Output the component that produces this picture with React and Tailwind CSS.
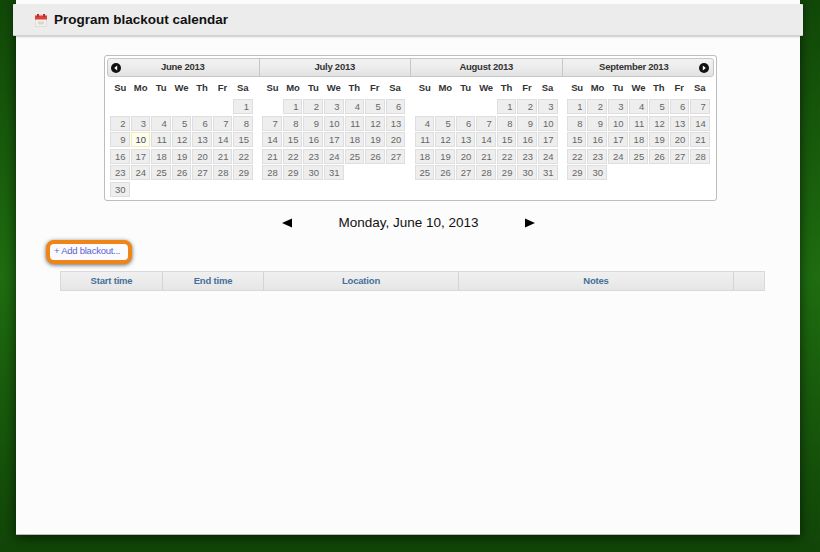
const months = [
  { name: "June 2013", offset: 6, days: 30, width: "w-[151px]" },
  { name: "July 2013", offset: 1, days: 31, width: "w-[152px]" },
  { name: "August 2013", offset: 4, days: 31, width: "w-[152px]" },
  { name: "September 2013", offset: 0, days: 30, width: "w-[152px]" },
];

const weekdays = ["Su", "Mo", "Tu", "We", "Th", "Fr", "Sa"];

function CalendarIcon() {
  return (
    <svg width="12" height="13" viewBox="0 0 12 13" className="shrink-0">
      <rect x="0.5" y="1" width="11" height="11.5" fill="#f4f0ec" stroke="#d8d0c8" strokeWidth="0.6" />
      <rect x="0" y="1.5" width="12" height="4" fill="#d8413c" />
      <rect x="2" y="0" width="2" height="3" fill="#b92c28" />
      <rect x="8" y="0" width="2" height="3" fill="#b92c28" />
      <rect x="3" y="7.5" width="6" height="3" fill="#ddd6cf" />
    </svg>
  );
}

function NavCircle({ dir }) {
  return (
    <svg width="10" height="10" viewBox="0 0 10 10" className="shrink-0">
      <circle cx="5" cy="5" r="5" fill="#111" />
      {dir === "prev" ? <path d="M6.2 2.6 L3.2 5 L6.2 7.4 Z" fill="#fff" /> : <path d="M3.8 2.6 L6.8 5 L3.8 7.4 Z" fill="#fff" />}
    </svg>
  );
}

function Month({ month }) {
  const blanks = Array.from({ length: month.offset });
  const days = Array.from({ length: month.days }, (_, i) => i + 1);
  return (
    <div className="w-[152.3px] pl-[3px] pr-[6.3px] shrink-0">
      <div className="grid grid-cols-7 h-[22px] items-center text-center text-[9.5px] tracking-[-0.1px] font-bold text-[#333]">
        {weekdays.map((d) => (
          <span key={d}>{d}</span>
        ))}
      </div>
      <div className="grid grid-cols-7 gap-x-px gap-y-[1.5px]">
        {blanks.map((_, i) => (
          <div key={i} />
        ))}
        {days.map((d) => {
          const today = month.name === "June 2013" && d === 10;
          return (
            <div
              key={d}
              className={
                today
                  ? "h-[15px] border border-[#f5ecb0] bg-[#fdfcf3] text-[#444] text-right text-[9.5px] leading-[13px] pr-[3px]"
                  : "h-[15px] border border-[#dedede] bg-[#eeeeee] text-[#666] text-right text-[9.5px] leading-[13px] pr-[3px]"
              }
            >
              {d}
            </div>
          );
        })}
      </div>
    </div>
  );
}

export default function App() {
  return (
    <div className="h-[552px] w-[820px] overflow-hidden bg-gradient-to-b from-[#114808] via-[#1f6e10] to-[#114508] font-['Liberation_Sans',Arial,sans-serif]">
      <div className="relative ml-[16px] h-[535px] w-[784px] bg-[#fcfcfc] border-b border-[#bbbbbb] shadow-[0_2px_12px_rgba(0,0,0,0.65)] pt-[4px]">
        <header className="-ml-[3px] -mr-[3px] h-[32px] flex items-center gap-[7px] pl-[22px] pt-px bg-[#ececec] border-b border-[#cfcfcf] shadow-[0_1px_2px_rgba(0,0,0,0.2)] rounded-[1px]">
          <CalendarIcon />
          <h1 className="text-[13.5px] font-bold text-[#111]">Program blackout calendar</h1>
        </header>

        <div className="ml-[88px] mt-[19px] w-[613px] h-[146px] border border-[#bdbdbd] rounded-[3px] bg-white p-[2px]">
          <div className="flex h-[19px] w-[607px] border border-[#c6c6c6] rounded-[3px] bg-gradient-to-b from-[#f2f2f2] via-[#ececec] to-[#e2e2e2]">
            {months.map((m, i) => (
              <div
                key={m.name}
                className={
                  (i === 0 ? "" : "border-l border-[#c6c6c6] ") +
                  m.width +
                  " flex items-center justify-between px-[4px] text-[9.5px] tracking-[-0.25px] font-bold text-[#333]"
                }
              >
                {i === 0 ? <span className="-ml-px"><NavCircle dir="prev" /></span> : i === 3 ? <span className="w-[2px]" /> : <span className="w-[10px]" />}
                <span className="whitespace-nowrap">{m.name}</span>
                {i === 3 ? <NavCircle dir="next" /> : <span className="w-[10px]" />}
              </div>
            ))}
          </div>
          <div className="flex">
            {months.map((m) => (
              <Month key={m.name} month={m} />
            ))}
          </div>
        </div>

        <div className="mt-[12px] ml-[266px] w-[253px] h-[20px] flex items-center justify-between text-[13.5px] text-[#111]">
          <svg width="10" height="10" viewBox="0 0 10 10">
            <path d="M0 5 L10 0.5 L10 9.5 Z" fill="#000" />
          </svg>
          <span className="whitespace-nowrap">Monday, June 10, 2013</span>
          <svg width="10" height="10" viewBox="0 0 10 10">
            <path d="M10 5 L0 0.5 L0 9.5 Z" fill="#000" />
          </svg>
        </div>

        <div className="ml-[30px] mt-[7px] w-[86px] h-[24px] flex items-center pl-[4px] pb-[2px] border-[4px] border-[#ef8417] rounded-[8px] bg-[#fbfbff] shadow-[0_1px_4px_rgba(0,0,0,0.6)] text-[9.5px] tracking-[-0.25px] whitespace-nowrap text-[#5a62d0]">
          + Add blackout...
        </div>

        <div className="ml-[44px] mt-[7px] w-[705px] h-[20px] flex border border-[#d9d9d9] bg-gradient-to-b from-[#f0f0f0] to-[#e6e6e6] text-[9.5px] tracking-[-0.2px] font-bold text-[#44709a]">
          <div className="w-[102px] flex items-center justify-center border-r border-[#d4d4d4]">Start time</div>
          <div className="w-[101px] flex items-center justify-center border-r border-[#d4d4d4]">End time</div>
          <div className="w-[195px] flex items-center justify-center border-r border-[#d4d4d4]">Location</div>
          <div className="w-[275px] flex items-center justify-center border-r border-[#d4d4d4]">Notes</div>
          <div className="flex-1" />
        </div>
      </div>
    </div>
  );
}
